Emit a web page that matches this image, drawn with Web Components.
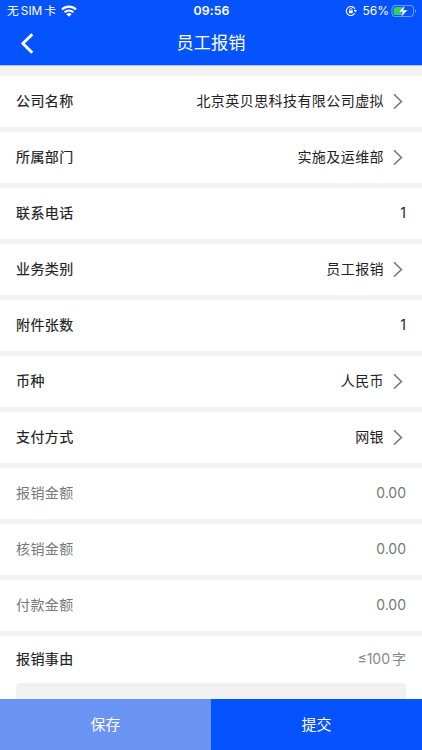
<!DOCTYPE html>
<html lang="zh-CN">
<head>
<meta charset="utf-8">
<meta name="viewport" content="width=device-width, initial-scale=1">
<title>员工报销</title>
<style>
  body {
    margin: 0;
    background: #f3f3f3;
    font-family: Inter, "Noto Sans CJK SC", sans-serif;
    --brand: #0553ff;
    --brand-soft: #6a94f3;
    --text: #222;
    --muted: #777;
  }
</style>
</head>
<body>
<expense-page>
  <status-bar slot="top" carrier="无SIM卡" time="09:56" battery="56"></status-bar>
  <nav-header slot="top">员工报销</nav-header>
  <form-row label="公司名称" arrow>北京英贝思科技有限公司虚拟</form-row>
  <form-row label="所属部门" arrow>实施及运维部</form-row>
  <form-row label="联系电话">1</form-row>
  <form-row label="业务类别" arrow>员工报销</form-row>
  <form-row label="附件张数">1</form-row>
  <form-row label="币种" arrow>人民币</form-row>
  <form-row label="支付方式" arrow>网银</form-row>
  <form-row label="报销金额" disabled>0.00</form-row>
  <form-row label="核销金额" disabled>0.00</form-row>
  <form-row label="付款金额" disabled>0.00</form-row>
  <reason-field label="报销事由">≤100<span style="margin-left:2px">字</span></reason-field>
  <action-button slot="actions" soft>保存</action-button>
  <action-button slot="actions">提交</action-button>
</expense-page>

<script>
class ExpensePage extends HTMLElement {
  constructor() {
    super();
    this.attachShadow({ mode: "open" }).innerHTML = `
      <style>
        :host {
          display: flex;
          flex-direction: column;
          height: 100vh;
          overflow: hidden;
        }
        .top {
          flex: none;
          height: 65px;
          background: var(--brand);
          border-bottom: 1px solid #a9c3fd;
        }
        main {
          flex: 1;
          min-height: 0;
          overflow: hidden;
          display: flex;
          flex-direction: column;
          gap: 5px;
          padding-top: 10px;
        }
        footer {
          flex: none;
          display: grid;
          grid-template-columns: 1fr 1fr;
          height: 51px;
        }
      </style>
      <div class="top"><slot name="top"></slot></div>
      <main><slot></slot></main>
      <footer><slot name="actions"></slot></footer>
    `;
  }
}

class StatusBar extends HTMLElement {
  connectedCallback() {
    const [, before, latin, after] = this.getAttribute("carrier").match(/^(\D?)([A-Z]+)(.*)$/);
    const battery = this.getAttribute("battery");
    this.attachShadow({ mode: "open" }).innerHTML = `
      <style>
        :host {
          display: grid;
          grid-template-columns: 1fr auto 1fr;
          align-items: center;
          height: 22px;
          padding: 0 5px 0 7px;
          color: #fff;
          font-size: 12px;
          line-height: 22px;
        }
        .side {
          display: flex;
          align-items: center;
        }
        .carrier {
          display: flex;
          gap: 2px;
          font-size: 11.8px;
        }
        .wifi {
          margin: 0 0 1px 5px;
        }
        .time {
          margin-right: 1px;
          font-weight: 600;
          font-size: 12.3px;
          letter-spacing: 0.1px;
        }
        .right {
          justify-content: flex-end;
        }
        .level {
          margin: 0 2px 0 5px;
        }
        svg {
          display: block;
        }
      </style>
      <div class="side">
        <div class="carrier"><span>${before}</span><span>${latin}</span><span>${after}</span></div>
        <svg class="wifi" width="16" height="12" viewBox="0 0 16 12" fill="none" stroke="#fff" stroke-width="2.1">
          <path d="M1 4.5a10 10 0 0 1 14 0"/>
          <path d="M3.6 7.3a6.2 6.2 0 0 1 8.8 0"/>
          <path d="M8 11.8 5.4 9.2a3.7 3.7 0 0 1 5.2 0z" fill="#fff" stroke="none"/>
        </svg>
      </div>
      <div class="time">${this.getAttribute("time")}</div>
      <div class="side right">
        <svg width="12" height="12" viewBox="0 0 12 12" fill="none" stroke="#fff">
          <path d="M9.7 8.3a4.5 4.5 0 1 1 .2-4.2" stroke-width="1.1"/>
          <path d="M8.7 5H12l-1.6 2.4z" fill="#fff" stroke="none"/>
          <rect x="3.9" y="5.4" width="3.8" height="2.9" rx=".4" fill="#fff" stroke="none"/>
          <path d="M4.7 5.6V4.5a1.1 1.1 0 0 1 2.2 0v1.1" stroke-width=".8"/>
        </svg>
        <span class="level">${battery}%</span>
        <svg width="26" height="14" viewBox="0 0 26 14">
          <rect x="1" y="1.5" width="21.5" height="11" rx="3" fill="none" stroke="#fff" stroke-opacity=".42"/>
          <path d="M4.3 3h7.2v8H4.3a1.8 1.8 0 0 1-1.8-1.8V4.8A1.8 1.8 0 0 1 4.3 3z" fill="#34cf5c"/>
          <path d="M24 5.2c1.4.5 1.4 3.1 0 3.6z" fill="#fff" fill-opacity=".5"/>
          <path d="M14 .9 7.5 7.9h4L10 13.3 16.8 6h-4.2z" fill="#fff" stroke="#0553ff" stroke-width=".4"/>
        </svg>
      </div>
    `;
  }
}

class NavHeader extends HTMLElement {
  constructor() {
    super();
    this.attachShadow({ mode: "open" }).innerHTML = `
      <style>
        :host {
          display: grid;
          grid-template-columns: 41px 1fr 41px;
          align-items: center;
          height: 42px;
          color: #fff;
          font-size: 17.2px;
          line-height: 42px;
          text-align: center;
        }
        svg {
          display: block;
          margin-left: 20px;
        }
      </style>
      <svg width="14" height="21" viewBox="0 0 14 21" fill="none" stroke="#fff" stroke-width="3">
        <path d="M12.3 1.2 2.8 10.5l9.5 9.3" stroke-linejoin="round"/>
      </svg>
      <span><slot></slot></span>
    `;
  }
}

class FormRow extends HTMLElement {
  connectedCallback() {
    const arrow = this.hasAttribute("arrow")
      ? `<svg width="10" height="17" viewBox="0 0 10 17" fill="none" stroke="#777" stroke-width="1.6">
           <path d="M1 1.2 8.4 8.5 1 15.8"/>
         </svg>`
      : "";
    this.attachShadow({ mode: "open" }).innerHTML = `
      <style>
        :host {
          flex: none;
          display: flex;
          align-items: center;
          justify-content: space-between;
          height: 51px;
          padding: 0 16px;
          background: #fff;
          color: var(--text);
          font-size: 14px;
          line-height: 20px;
        }
        :host([disabled]) {
          color: var(--muted);
        }
        span {
          padding-bottom: 2px;
        }
        .label {
          letter-spacing: 0.4px;
          -webkit-text-stroke: 0.18px currentColor;
        }
        :host([disabled]) .label {
          -webkit-text-stroke: 0;
        }
        .value {
          display: flex;
          align-items: center;
          gap: 9px;
        }
        :host([arrow]) .value {
          letter-spacing: 0.43px;
        }
        svg {
          margin-right: 3px;
        }
      </style>
      <span class="label">${this.getAttribute("label")}</span>
      <div class="value"><span><slot></slot></span>${arrow}</div>
    `;
  }
}

class ReasonField extends HTMLElement {
  connectedCallback() {
    this.attachShadow({ mode: "open" }).innerHTML = `
      <style>
        :host {
          flex: none;
          display: block;
          height: 160px;
          padding: 12px 16px 0;
          background: #fff;
          color: var(--text);
          font-size: 14px;
          line-height: 22px;
        }
        .head {
          display: flex;
          justify-content: space-between;
        }
        .label {
          letter-spacing: 0.4px;
          -webkit-text-stroke: 0.18px currentColor;
        }
        .hint {
          color: #888;
        }
        .box {
          height: 90px;
          margin-top: 13px;
          border-radius: 4px;
          background: #f1f1f1;
        }
      </style>
      <div class="head">
        <span class="label">${this.getAttribute("label")}</span>
        <span class="hint"><slot></slot></span>
      </div>
      <div class="box"></div>
    `;
  }
}

class ActionButton extends HTMLElement {
  constructor() {
    super();
    this.attachShadow({ mode: "open" }).innerHTML = `
      <style>
        :host {
          display: flex;
          align-items: center;
          justify-content: center;
          background: var(--brand);
          color: #fff;
          font-size: 15px;
          line-height: 22px;
        }
        :host([soft]) {
          background: var(--brand-soft);
        }
      </style>
      <slot></slot>
    `;
  }
}

customElements.define("expense-page", ExpensePage);
customElements.define("status-bar", StatusBar);
customElements.define("nav-header", NavHeader);
customElements.define("form-row", FormRow);
customElements.define("reason-field", ReasonField);
customElements.define("action-button", ActionButton);
</script>
</body>
</html>
